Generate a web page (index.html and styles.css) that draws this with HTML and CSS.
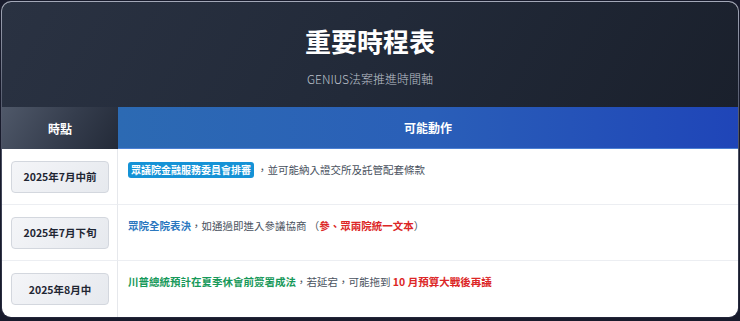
FILE: index.html
```html
<!DOCTYPE html>
<html lang="zh-Hant">
<head>
<meta charset="utf-8">
<title>重要時程表</title>
<link rel="stylesheet" href="styles.css">
</head>
<body>
<div class="frame">
  <div class="card">
    <header class="hero">
      <h1 class="title">重要時程表</h1>
      <p class="subtitle">GENIUS法案推進時間軸</p>
    </header>
    <div class="table">
      <div class="th th-time">時點</div>
      <div class="th th-action">可能動作</div>

      <div class="td td-time"><span class="date">2025年7月中前</span></div>
      <div class="td td-action"><span class="badge">眾議院金融服務委員會排審</span><span class="muted">，並可能納入證交所及託管配套條款</span></div>

      <div class="td td-time"><span class="date">2025年7月下旬</span></div>
      <div class="td td-action"><span class="blue">眾院全院表決</span><span class="muted">，如通過即進入參議協商 （</span><span class="red">參、眾兩院統一文本</span><span class="muted">）</span></div>

      <div class="td td-time last"><span class="date">2025年8月中</span></div>
      <div class="td td-action last"><span class="green">川普總統預計在夏季休會前簽署成法</span><span class="muted">，若延宕，可能拖到 </span><span class="red">10 月預算大戰後再議</span></div>
    </div>
  </div>
</div>
</body>
</html>
```

FILE: styles.css
```css
* { box-sizing: border-box; }
html, body { margin: 0; padding: 0; }
body {
  background: #181b2c;
  font-family: "Noto Sans CJK TC", "Noto Sans", sans-serif;
  height: 321px;
  overflow: hidden;
}
.frame {
  margin: 1px;
  padding: 1px;
  border-radius: 10px;
  background: linear-gradient(180deg, #a3a8b8 0%, #5a6072 30%, #23263a 100%);
}
.card {
  border-radius: 9px;
  overflow: hidden;
  background: #ffffff;
}
.hero {
  height: 105px;
  padding-top: 24px;
  background: linear-gradient(120deg, #2a3242 0%, #222a39 50%, #1a202c 100%);
  text-align: center;
}
.title {
  margin: 0;
  font-size: 26px;
  line-height: 30px;
  font-weight: 700;
  color: #ffffff;
}
.subtitle {
  margin: 15px 0 0;
  font-size: 12px;
  line-height: 16px;
  font-weight: 300;
  color: #bcc1cb;
}
.table {
  display: grid;
  grid-template-columns: 116px 1fr;
}
.th {
  height: 42px;
  display: flex;
  align-items: center;
  justify-content: center;
  color: #ffffff;
  font-size: 12px;
  font-weight: 700;
}
.th-time {
  background: linear-gradient(120deg, #4f5869 0%, #353d4d 55%, #232a38 100%);
}
.th-action {
  background: linear-gradient(90deg, #2c6ab3 0%, #2a5fb8 50%, #1f45b8 100%);
  border-bottom: 1px solid #4b7fd2;
}
.td {
  height: 56px;
  border-bottom: 1px solid #eceef2;
}
.td.last { border-bottom: none; }
.td-time {
  display: flex;
  align-items: center;
  padding: 0 8px 0 9px;
  border-right: 1px solid #e6e8ec;
}
.date {
  flex: 1;
  height: 32px;
  display: flex;
  align-items: center;
  justify-content: center;
  background: linear-gradient(135deg, #f4f5f8 0%, #e6e9ee 100%);
  border: 1px solid #d3d7de;
  border-radius: 4px;
  font-size: 10.5px;
  font-weight: 700;
  color: #1f2633;
}
.td-action {
  padding: 13px 10px 0 10px;
  font-size: 10.5px;
  line-height: 16px;
}
.badge {
  display: inline-block;
  padding: 0 3px;
  line-height: 16px;
  font-size: 10px;
  font-weight: 700;
  color: #ffffff;
  background: #1592d6;
  border-radius: 3px;
  margin-right: 3px;
}
.muted { color: #4a5260; }
.blue { color: #2b78bf; font-weight: 700; }
.red { color: #dc2626; font-weight: 700; }
.green { color: #17995a; font-weight: 700; }
```
